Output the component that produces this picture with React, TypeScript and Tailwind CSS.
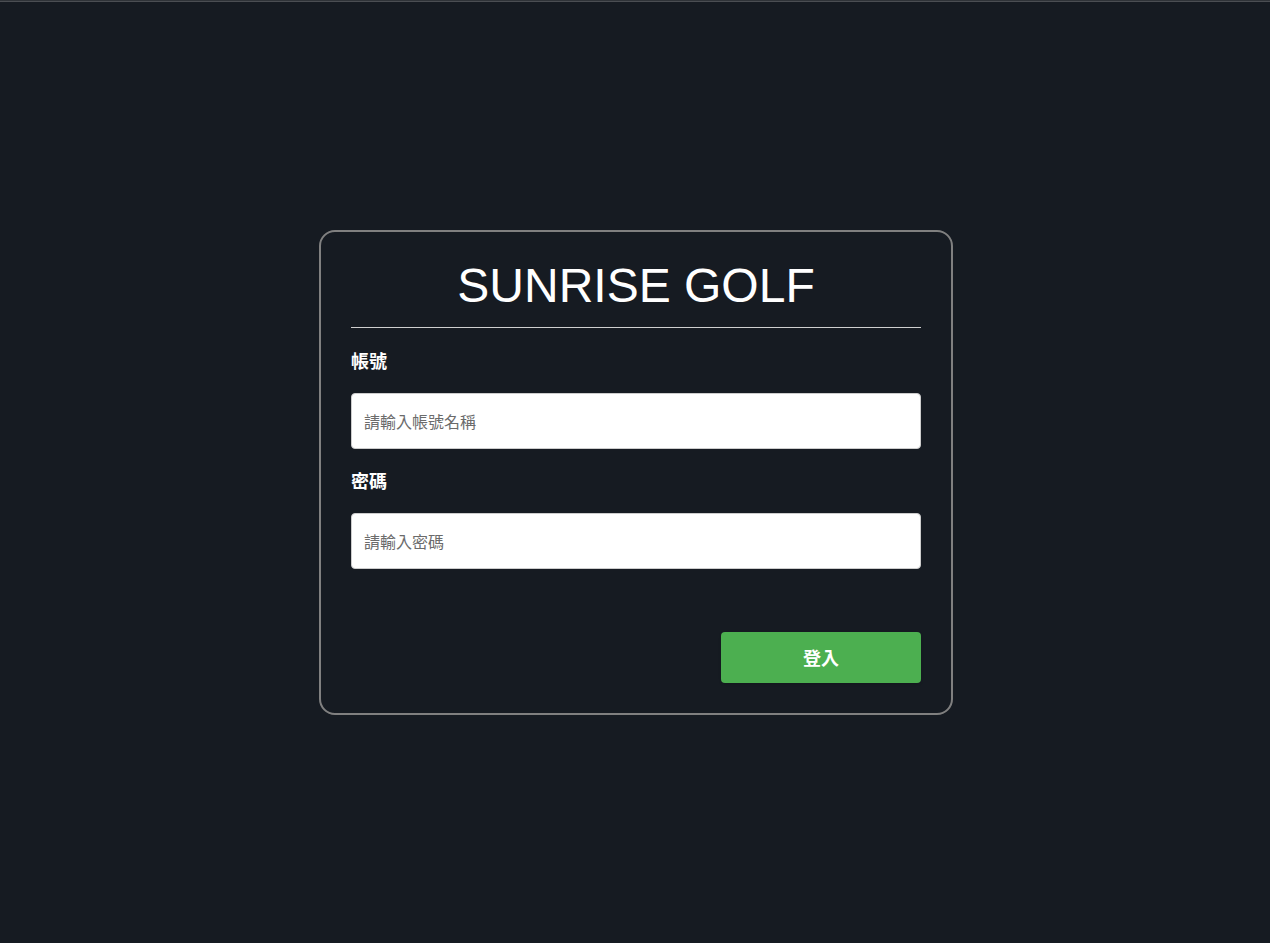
export default function App() {
  return (
    <div className="flex h-screen flex-col bg-[#161b22]">
      <div className="h-[2px] border-t border-[#2f3338] bg-[#4b4e53]" />
      <main className="flex flex-1 items-center justify-center pl-[2px]">
        <form
          className="flex w-[634px] flex-col rounded-[16px] border-2 border-[#808080] px-[30px] pt-[30px] pb-[30px] font-['Noto_Sans_CJK_TC',sans-serif]"
          onSubmit={(e) => e.preventDefault()}
        >
          <h1 className="border-b border-[#cfcfcf] pb-[17px] text-center font-['Liberation_Sans','Noto_Sans_CJK_TC',sans-serif] text-[48px] leading-none font-normal text-white">
            SUNRISE GOLF
          </h1>
          <label className="mt-[19px] text-[18px] leading-[27px] font-bold text-white">帳號</label>
          <input
            type="text"
            placeholder="請輸入帳號名稱"
            className="mt-[19px] h-[56px] w-full rounded-[4px] border border-[#cccccc] bg-white px-3 text-[16px] text-[#333] placeholder:text-[#6b6b6b] outline-none"
          />
          <label className="mt-[18px] text-[18px] leading-[27px] font-bold text-white">密碼</label>
          <input
            type="password"
            placeholder="請輸入密碼"
            className="mt-[19px] h-[56px] w-full rounded-[4px] border border-[#cccccc] bg-white px-3 text-[16px] text-[#333] placeholder:text-[#6b6b6b] outline-none"
          />
          <div className="mt-[63px] flex justify-end">
            <button
              type="submit"
              className="h-[51px] w-[200px] rounded-[4px] bg-[#4caf50] text-[18px] font-bold text-white shadow-sm"
            >
              登入
            </button>
          </div>
        </form>
      </main>
    </div>
  );
}
